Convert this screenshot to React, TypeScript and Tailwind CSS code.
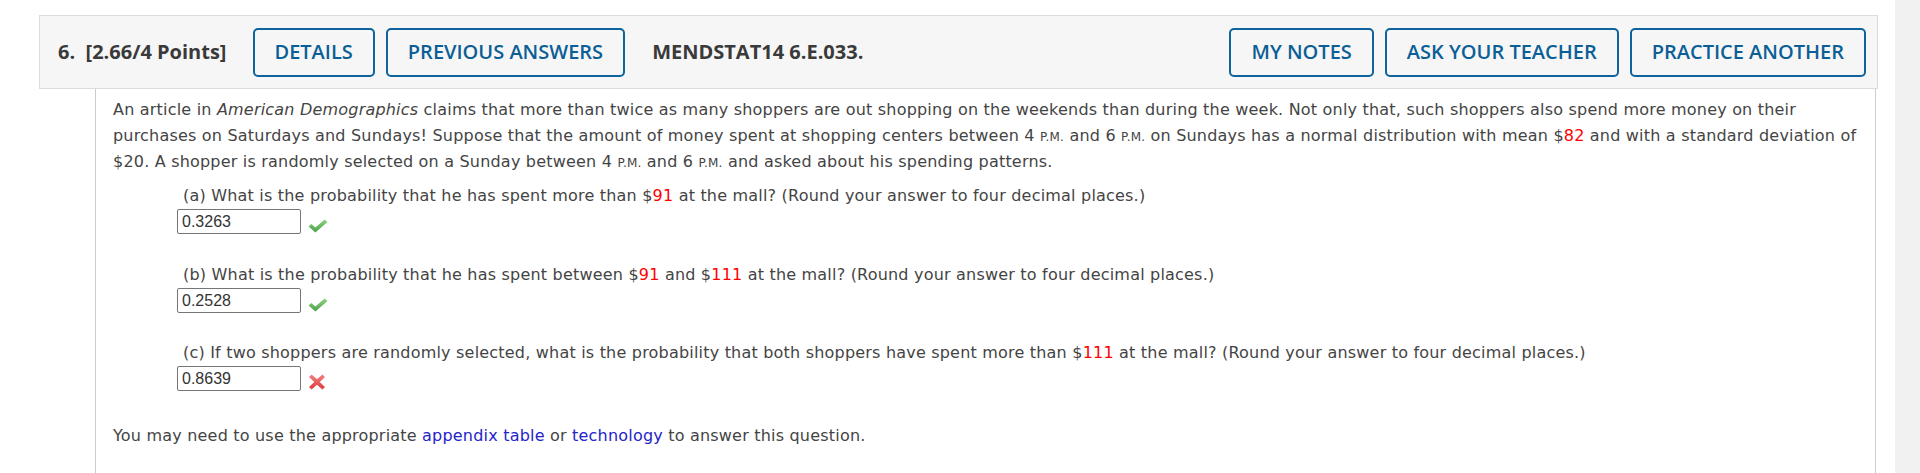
import React from 'react';

const verdana = { fontFamily: '"DejaVu Sans", Verdana, sans-serif' };

function Btn({ children }: { children: React.ReactNode }) {
  return (
    <button className="h-[49px] px-[20px] border-2 border-[#0e639c] rounded-[5px] text-[#0b5f96] text-[20px] font-semibold uppercase bg-transparent">
      {children}
    </button>
  );
}

function Check() {
  return (
    <svg width="20" height="14" viewBox="0 0 20 14" className="ml-[7px] mb-[1px]">
      <defs>
        <linearGradient id="gk" x1="0" y1="0" x2="0" y2="1">
          <stop offset="0" stopColor="#8fd486" />
          <stop offset="1" stopColor="#48a044" />
        </linearGradient>
      </defs>
      <path d="M0.5 7.5 L3.4 5 L7.4 8.4 L16.6 0.6 L19.5 3.1 L7.4 13.5 Z" fill="url(#gk)" />
    </svg>
  );
}

function Cross() {
  return (
    <svg width="18" height="16" viewBox="0 0 18 16" className="ml-[7px] mb-[1px]">
      <defs>
        <linearGradient id="gx" x1="0" y1="0" x2="0" y2="1">
          <stop offset="0" stopColor="#f58080" />
          <stop offset="1" stopColor="#dc3a3a" />
        </linearGradient>
      </defs>
      <path
        d="M1 3 L3.6 0.6 L9 5.3 L14.4 0.6 L17 3 L11.7 8 L17 13 L14.4 15.4 L9 10.7 L3.6 15.4 L1 13 L6.3 8 Z"
        fill="url(#gx)"
      />
    </svg>
  );
}

const PM = () => <span className="text-[12px] leading-none">P.M.</span>;
const Red = ({ children }: { children: React.ReactNode }) => (
  <span className="text-[#ff0000]">{children}</span>
);

function Answer({ value, ok }: { value: string; ok: boolean }) {
  return (
    <div className="flex items-end h-[25px]">
      <div
        className="w-[124px] h-[25px] border border-[#767676] rounded-[2px] px-[4px] text-[16px] leading-[23px] tracking-normal text-[#333]"
        style={{ fontFamily: '"Liberation Sans", Arial, sans-serif' }}
      >
        {value}
      </div>
      {ok ? <Check /> : <Cross />}
    </div>
  );
}

export default function App() {
  return (
    <div className="w-[1920px] h-[473px] flex bg-white overflow-hidden">
      <div className="flex-1 pl-[39px] pr-[17px] pt-[15px] flex flex-col">
        {/* Question header */}
        <div
          className="h-[74px] shrink-0 border border-[#dcdcdc] bg-[#f6f6f6] flex items-center pl-[18px] pr-[11px] text-[20px] text-[#3a3a3a]"
          style={{ fontFamily: '"Open Sans", sans-serif' }}
        >
          <span className="font-bold whitespace-pre">6.  [2.66/4 Points]</span>
          <div className="flex gap-[11px] ml-[26px]">
            <Btn>Details</Btn>
            <Btn>Previous Answers</Btn>
          </div>
          <span className="font-bold ml-[27px]">MENDSTAT14 6.E.033.</span>
          <div className="flex gap-[11px] ml-auto">
            <Btn>My Notes</Btn>
            <Btn>Ask Your Teacher</Btn>
            <Btn>Practice Another</Btn>
          </div>
        </div>

        {/* Question body */}
        <div
          className="flex-1 ml-[56px] mr-[2px] border-l border-r border-[#cccccc] pl-[17px] pt-[8px] text-[16px] leading-[26px] tracking-[0.2px] text-[#444444]"
          style={verdana}
        >
          <p className="whitespace-nowrap">
            An article in <i>American Demographics</i> claims that more than twice as many shoppers are
            out shopping on the weekends than during the week. Not only that, such shoppers also spend
            more money on their
            <br />
            purchases on Saturdays and Sundays! Suppose that the amount of money spent at shopping
            centers between 4 <PM /> and 6 <PM /> on Sundays has a normal distribution with mean $
            <Red>82</Red> and with a standard deviation of
            <br />
            $20. A shopper is randomly selected on a Sunday between 4 <PM /> and 6 <PM /> and asked about
            his spending patterns.
          </p>

          <div className="pl-[64px] mt-[8px]">
            <div className="pl-[6px]">
              (a) What is the probability that he has spent more than $<Red>91</Red> at the mall? (Round
              your answer to four decimal places.)
            </div>
            <Answer value="0.3263" ok />

            <div className="mt-[28px] pl-[6px]">
              (b) What is the probability that he has spent between $<Red>91</Red> and $<Red>111</Red> at
              the mall? (Round your answer to four decimal places.)
            </div>
            <Answer value="0.2528" ok />

            <div className="mt-[27px] pl-[6px]">
              (c) If two shoppers are randomly selected, what is the probability that both shoppers have
              spent more than $<Red>111</Red> at the mall? (Round your answer to four decimal places.)
            </div>
            <Answer value="0.8639" ok={false} />
          </div>

          <p className="mt-[32px]">
            You may need to use the appropriate <span className="text-[#2424c8]">appendix table</span> or{' '}
            <span className="text-[#2424c8]">technology</span> to answer this question.
          </p>
        </div>
      </div>
      <div className="w-[25px] shrink-0 bg-[#f1f1f1]" />
    </div>
  );
}
